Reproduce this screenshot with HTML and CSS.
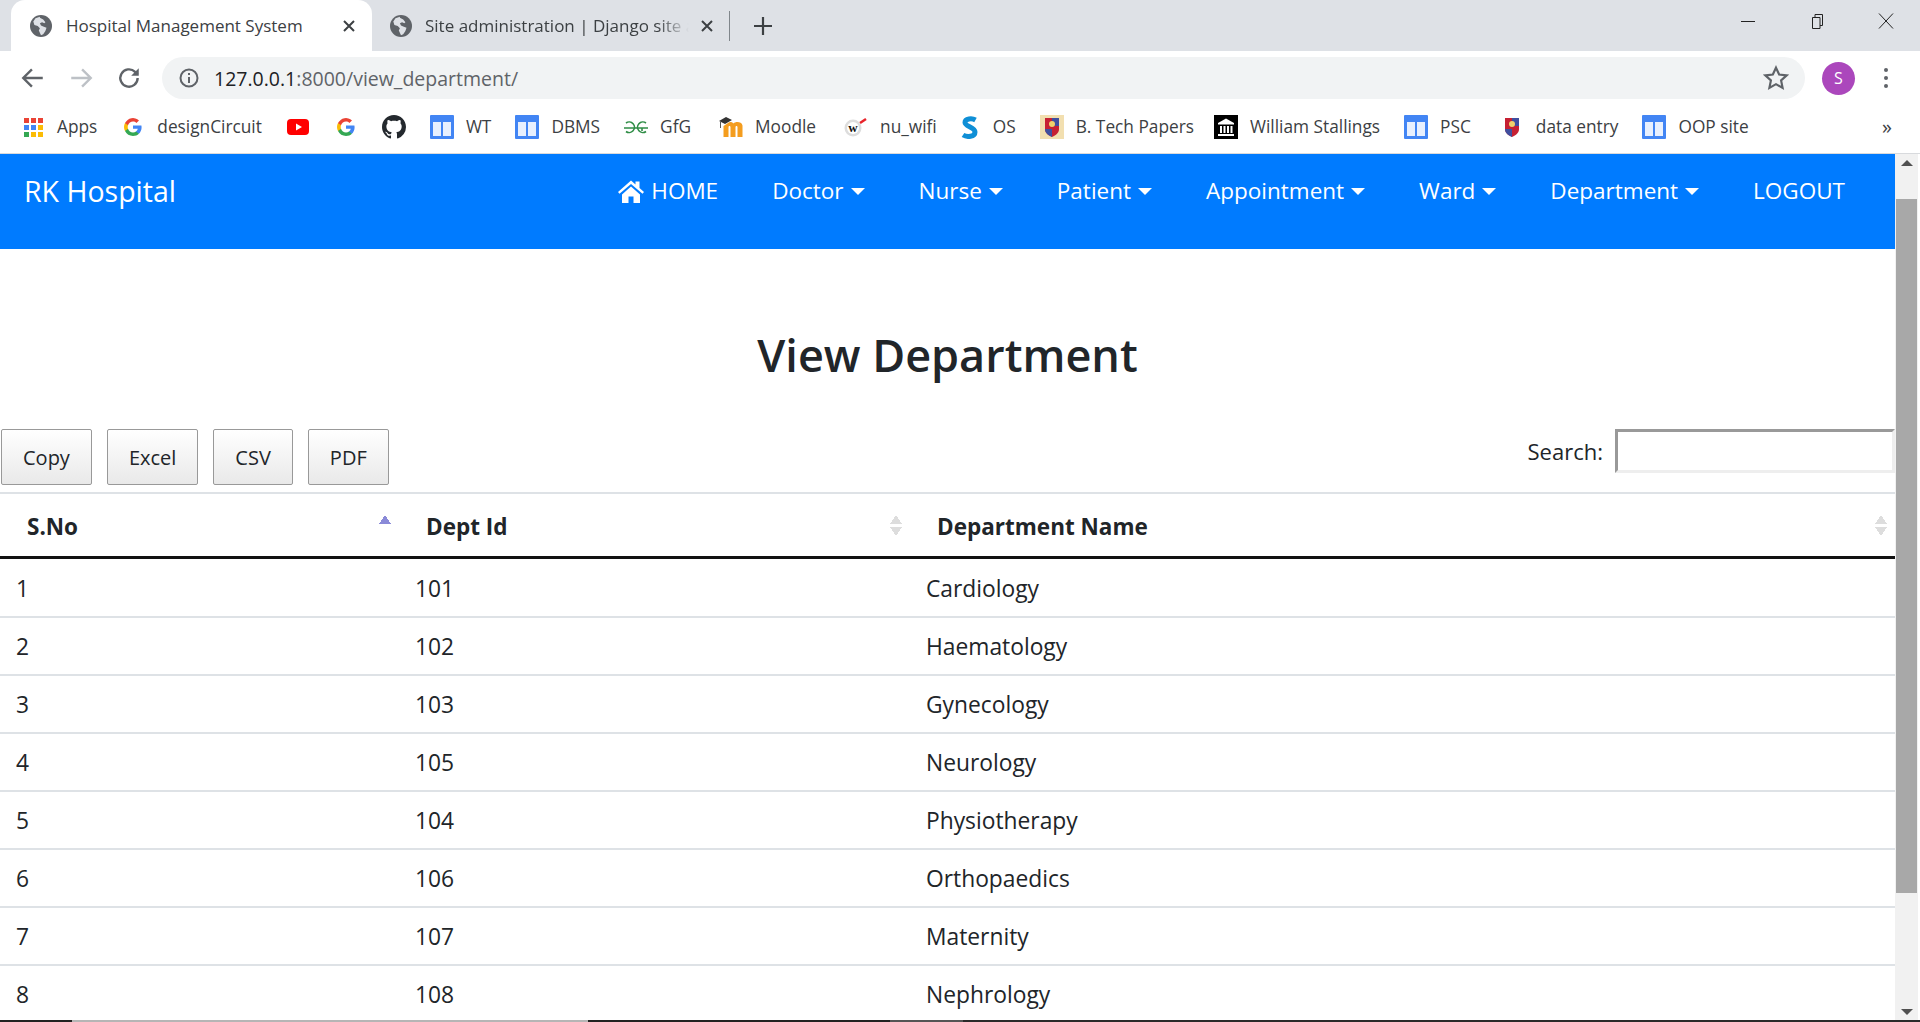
FILE: index.html
```html
<!DOCTYPE html>
<html>
<head>
    <title>Hospital Management System</title>
    <link rel="stylesheet" href="styles.css">
</head>
<body>
    <svg class="defs" width="0" height="0">
        <symbol id="globe" viewBox="0 0 20 20">
            <circle cx="10" cy="10" r="10" fill="#5f6368"/>
            <path d="M9 1.500 5 3 3 6l1 3 3 1 2 2-1 2 2 4.500 2-1 2-3 1-3-3-1-2-1-1-2 2-1 2 1 1-1-2-2.500-3-1.500z" fill="#dee1e6"/>
        </symbol>
        <symbol id="page" viewBox="0 0 24 24">
            <rect width="24" height="24" rx="1" fill="#4285f4"/>
            <path d="M3 7h18v14H3z" fill="#e8f0fe"/>
            <path d="M11 7h2v14h-2z" fill="#4285f4"/>
        </symbol>
        <symbol id="glogo" viewBox="0 0 18 18">
            <path d="M17.600 9.200c0-.6-.1-1.200-.2-1.800H9v3.400h4.800a4.100 4.100 0 0 1-1.800 2.700v2.200h2.900c1.700-1.600 2.700-3.900 2.700-6.500z" fill="#4285f4"/>
            <path d="M9 18c2.400 0 4.500-.8 5.900-2.200L12 13.600c-.8.500-1.800.9-3 .9-2.300 0-4.300-1.600-5-3.700H1v2.300A9 9 0 0 0 9 18z" fill="#34a853"/>
            <path d="M4 10.700a5.400 5.400 0 0 1 0-3.400V5H1a9 9 0 0 0 0 8l3-2.300z" fill="#fbbc05"/>
            <path d="M9 3.600c1.300 0 2.500.5 3.400 1.300L15 2.400A9 9 0 0 0 1 5l3 2.300c.7-2.100 2.700-3.700 5-3.700z" fill="#ea4335"/>
        </symbol>
        <symbol id="crest" viewBox="0 0 24 24">
            <path d="M5 3h14v11c0 4-3 6-7 8-4-2-7-4-7-8z" fill="#c62033"/>
            <path d="M12 3h7v8h-7z" fill="#3f4f9f"/>
            <path d="M5 14h7v8c-4-2-7-4-7-8z" fill="#3f4f9f"/>
            <circle cx="12" cy="9" r="3" fill="#f1d16b"/>
        </symbol>
    </svg>

    <div class="tabstrip">
        <div class="tab tab-active">
            <svg class="tab-icon"><use href="#globe"/></svg>
            <span class="tab-title">Hospital Management System</span>
            <svg class="tab-close" viewBox="0 0 12 12"><path d="M1 1l10 10M11 1 1 11"/></svg>
        </div>
        <div class="tab">
            <svg class="tab-icon"><use href="#globe"/></svg>
            <span class="tab-title tab-fade">Site administration | Django site admin</span>
            <svg class="tab-close" viewBox="0 0 12 12"><path d="M1 1l10 10M11 1 1 11"/></svg>
        </div>
        <div class="tab-sep"></div>
        <svg class="tab-new" viewBox="0 0 18 18"><path d="M9 0v18M0 9h18"/></svg>
        <div class="win-controls">
            <svg class="win-btn" viewBox="0 0 16 16"><path d="M1 8.500h14"/></svg>
            <svg class="win-btn" viewBox="0 0 16 16"><path d="M3.500 4.500h7.500v11H3.500zM6 4.500V1.500h7.500v11H11"/></svg>
            <svg class="win-btn" viewBox="0 0 16 16"><path d="M1 .5 15 15.500M15 .5 1 15.500"/></svg>
        </div>
    </div>

    <div class="toolbar">
        <svg class="tool-icon" viewBox="0 0 24 24"><path d="M21 12H4M11 4l-8 8 8 8"/></svg>
        <svg class="tool-icon tool-off" viewBox="0 0 24 24"><path d="M3 12h17M13 4l8 8-8 8"/></svg>
        <svg class="tool-icon" viewBox="0 0 24 24"><path d="M20 12a8 8 0 1 1-2.400-5.700L20 8.500"/><path class="solid" d="M21 3v7h-7z"/></svg>
        <div class="omnibox">
            <svg class="omni-info" viewBox="0 0 20 20"><circle cx="10" cy="10" r="8.500"/><path d="M10 9v6M10 5v2"/></svg>
            <span class="url"><span class="url-host">127.0.0.1</span>:8000/view_department/</span>
            <svg class="omni-star" viewBox="0 0 24 24"><path d="M12 2.500l2.900 6.300 6.900.8-5.100 4.700 1.400 6.800-6.100-3.400-6.100 3.400 1.400-6.800-5.100-4.700 6.900-.8z"/></svg>
        </div>
        <div class="avatar">S</div>
        <div class="kebab"><i></i><i></i><i></i></div>
    </div>

    <div class="bookmarks">
        <div class="bm">
            <svg class="bm-icon" viewBox="0 0 24 24">
                <path d="M3 3h5v5H3z" fill="#ea4335"/><path d="M10 3h5v5h-5z" fill="#ea4335"/><path d="M17 3h5v5h-5z" fill="#ea4335"/>
                <path d="M3 10h5v5H3z" fill="#4285f4"/><path d="M10 10h5v5h-5z" fill="#4285f4"/><path d="M17 10h5v5h-5z" fill="#fbbc05"/>
                <path d="M3 17h5v5H3z" fill="#34a853"/><path d="M10 17h5v5h-5z" fill="#fbbc05"/><path d="M17 17h5v5h-5z" fill="#fbbc05"/>
            </svg>
            <span>Apps</span>
        </div>
        <div class="bm">
            <svg class="bm-icon"><use href="#glogo" x="3" y="3" width="18" height="18"/></svg>
            <span>designCircuit</span>
        </div>
        <div class="bm">
            <svg class="bm-icon" viewBox="0 0 24 24"><rect x="1" y="4" width="22" height="16" rx="4" fill="#f00"/><path d="M10 8.500v7l6-3.500z" fill="#fff"/></svg>
        </div>
        <div class="bm">
            <svg class="bm-icon"><use href="#glogo" x="3" y="3" width="18" height="18"/></svg>
        </div>
        <div class="bm">
            <svg class="bm-icon" viewBox="0 0 16 16"><path fill="#24292e" d="M8 0C3.580 0 0 3.580 0 8c0 3.540 2.290 6.530 5.470 7.590.4.070.55-.17.55-.38 0-.19-.01-.82-.01-1.490-2.010.37-2.530-.49-2.690-.94-.09-.23-.48-.94-.82-1.130-.28-.15-.68-.52-.01-.53.63-.01 1.080.58 1.230.82.720 1.210 1.870.87 2.330.66.070-.52.280-.87.510-1.070-1.780-.2-3.640-.89-3.640-3.950 0-.87.310-1.590.820-2.150-.08-.2-.36-1.020.08-2.120 0 0 .67-.21 2.200.82.640-.18 1.320-.27 2-.27s1.360.09 2 .27c1.530-1.040 2.200-.82 2.200-.82.440 1.100.160 1.920.080 2.120.510.560.820 1.270.820 2.150 0 3.070-1.870 3.750-3.650 3.950.290.250.540.730.540 1.480 0 1.070-.01 1.930-.01 2.200 0 .210.150.460.550.380A8.010 8.010 0 0 0 16 8c0-4.420-3.580-8-8-8z"/></svg>
        </div>
        <div class="bm">
            <svg class="bm-icon"><use href="#page"/></svg>
            <span>WT</span>
        </div>
        <div class="bm">
            <svg class="bm-icon"><use href="#page"/></svg>
            <span>DBMS</span>
        </div>
        <div class="bm">
            <svg class="bm-icon" viewBox="0 0 24 24"><g fill="none" stroke="#2f8d46" stroke-width="1.600"><path d="M2 8a5.300 5.300 0 1 1 0 8.500M22 8a5.300 5.300 0 1 0 0 8.500M0 13h24M18 13v3"/></g></svg>
            <span>GfG</span>
        </div>
        <div class="bm bm-moodle">
            <svg class="bm-icon" viewBox="0 0 24 24">
                <path d="M9 8c1.500-1.500 4-1.500 5.500.5 1.500-2 8-2.500 9 2V22h-5v-10c0-1.500-2-1.500-2 0v10h-5v-10c0-1.500-2-1.500-2 0v10h-5V11z" fill="#f49d1f"/>
                <path d="M0 6l7-4 6 3-7 4z" fill="#333"/><path d="M1.500 7v6" stroke="#555" fill="none"/>
            </svg>
            <span>Moodle</span>
        </div>
        <div class="bm bm-wifi">
            <svg class="bm-icon" viewBox="0 0 24 24">
                <circle cx="9" cy="13" r="8.500" fill="#ddd"/><circle cx="9" cy="13" r="6" fill="#fff"/>
                <text x="9" y="17" text-anchor="middle" class="wiki-w">w</text>
                <path d="M16 8l6-4" stroke="#e8232a" stroke-width="2.500"/>
            </svg>
            <span>nu_wifi</span>
        </div>
        <div class="bm bm-os">
            <svg class="bm-icon" viewBox="0 0 24 24"><path d="M18.500 5C15 3 8 3.500 8 7.500s10 4.500 10 9.500-8 5.500-12 3" fill="none" stroke="#0f8fd6" stroke-width="5"/></svg>
            <span>OS</span>
        </div>
        <div class="bm">
            <svg class="bm-icon" viewBox="0 0 24 24"><rect width="24" height="24" fill="#f2dfb0"/><use href="#crest" width="24" height="24"/></svg>
            <span>B. Tech Papers</span>
        </div>
        <div class="bm bm-stallings">
            <svg class="bm-icon" viewBox="0 0 24 24"><rect width="24" height="24" fill="#000"/><path d="M12 3.500 20 8v1.500H4V8zM4 19h16v2H4zM6 11h2v7H6zM9.500 11h2v7h-2zM13 11h2v7h-2zM16.500 11h2v7h-2z" fill="#fff"/></svg>
            <span>William Stallings</span>
        </div>
        <div class="bm">
            <svg class="bm-icon"><use href="#page"/></svg>
            <span>PSC</span>
        </div>
        <div class="bm bm-entry">
            <svg class="bm-icon"><use href="#crest"/></svg>
            <span>data entry</span>
        </div>
        <div class="bm">
            <svg class="bm-icon"><use href="#page"/></svg>
            <span>OOP site</span>
        </div>
        <div class="bm-more">»</div>
    </div>

    <div class="viewport">
        <div class="page">
            <nav class="navbar">
                <a class="brand">RK Hospital</a>
                <ul class="nav">
                    <li class="nav-home">
                        <svg class="home-icon" viewBox="0 0 28 24"><path d="M14 1.500 1 13l1.500 1.800L14 5l11.500 9.800L27 13l-4.500-4V2.500h-4V5.500zM5 15.500V24h6.500v-6.500h5V24H23v-8.500L14 7.500z"/></svg>
                        HOME
                    </li>
                    <li class="drop">Doctor</li>
                    <li class="drop">Nurse</li>
                    <li class="drop">Patient</li>
                    <li class="drop">Appointment</li>
                    <li class="drop">Ward</li>
                    <li class="drop">Department</li>
                    <li>LOGOUT</li>
                </ul>
            </nav>

            <h1 class="title">View Department</h1>

            <div class="dt-top">
                <div class="dt-buttons">
                    <button class="dt-btn">Copy</button>
                    <button class="dt-btn">Excel</button>
                    <button class="dt-btn">CSV</button>
                    <button class="dt-btn">PDF</button>
                </div>
                <label class="dt-search">Search: <input type="search"></label>
            </div>

            <table class="dt">
                <colgroup>
                    <col class="col-sno">
                    <col class="col-id">
                    <col>
                </colgroup>
                <thead>
                    <tr>
                        <th><div class="th-in">S.No<span class="sort sort-asc"></span></div></th>
                        <th><div class="th-in">Dept Id<span class="sort"></span></div></th>
                        <th><div class="th-in">Department Name<span class="sort"></span></div></th>
                    </tr>
                </thead>
                <tbody>
                    <tr><td>1</td><td>101</td><td>Cardiology</td></tr>
                    <tr><td>2</td><td>102</td><td>Haematology</td></tr>
                    <tr><td>3</td><td>103</td><td>Gynecology</td></tr>
                    <tr><td>4</td><td>105</td><td>Neurology</td></tr>
                    <tr><td>5</td><td>104</td><td>Physiotherapy</td></tr>
                    <tr><td>6</td><td>106</td><td>Orthopaedics</td></tr>
                    <tr><td>7</td><td>107</td><td>Maternity</td></tr>
                    <tr><td>8</td><td>108</td><td>Nephrology</td></tr>
                </tbody>
            </table>
        </div>
        <div class="scrollbar">
            <span class="arrow-up"></span>
            <div class="thumb"></div>
            <span class="arrow-down"></span>
        </div>
    </div>

    <div class="taskbar">
        <i class="tb-a"></i><i class="tb-b"></i><i class="tb-a2"></i><i class="tb-c"></i><i class="tb-d"></i>
    </div>
</body>
</html>
```

FILE: styles.css
```css
* { box-sizing: border-box; }
html, body { margin: 0; height: 100%; }
body { display: flex; flex-direction: column; height: 1022px; overflow: hidden; background: #fff; font-family: "Open Sans", "Noto Sans", sans-serif; color: #212529; }
.defs { position: absolute; }

/* browser chrome */
.tabstrip { display: flex; align-items: center; height: 51px; flex: none; padding-left: 11px; background: #dee1e6; }
.tab { display: flex; align-items: center; width: 361px; height: 51px; padding-left: 19px; flex: none; color: #3c4043; }
.tab + .tab { width: 347px; padding-left: 18px; }
.tab-active { background: #fff; border-radius: 14px 14px 0 0; }
.tab-icon { width: 22px; height: 22px; flex: none; }
.tab-title { width: 265px; margin-left: 14px; font-size: 17px; white-space: nowrap; overflow: hidden; flex: none; }
.tab-fade { width: 264px; margin-left: 13px; -webkit-mask-image: linear-gradient(to right, #000 88%, transparent 100%); mask-image: linear-gradient(to right, #000 88%, transparent 100%); }
.tab-close { width: 12px; height: 12px; margin-left: 12px; flex: none; fill: none; stroke: #3c4043; stroke-width: 2; }
.tab-sep { width: 1px; height: 30px; margin-left: 10px; background: #80868b; flex: none; }
.tab-new { width: 18px; height: 18px; margin-left: 24px; fill: none; stroke: #3c4043; stroke-width: 2.200; flex: none; }
.win-controls { display: flex; margin-left: auto; gap: 53px; padding-right: 26px; margin-top: -10px; }
.win-btn { width: 16px; height: 16px; fill: none; stroke: #222; stroke-width: 1; }

.toolbar { display: flex; align-items: center; height: 54px; flex: none; padding: 0 0 0 20px; }
.tool-icon { width: 26px; height: 26px; margin-right: 22px; flex: none; fill: none; stroke: #5f6368; stroke-width: 2.200; }
.tool-icon .solid { fill: #5f6368; stroke: none; }
.tool-off { stroke: #bdc1c6; }
.omnibox { display: flex; align-items: center; width: 1643px; height: 42px; margin-left: -2px; padding: 0 16px 0 17px; flex: none; background: #f1f3f4; border-radius: 21px; }
.omni-info { width: 20px; height: 20px; flex: none; fill: none; stroke: #5f6368; stroke-width: 2; }
.url { margin-left: 15px; font-size: 19.500px; color: #5f6368; }
.url-host { color: #202124; }
.omni-star { width: 26px; height: 26px; margin-left: auto; fill: none; stroke: #5f6368; stroke-width: 2; }
.avatar { display: flex; align-items: center; justify-content: center; width: 33px; height: 33px; margin-left: 17px; flex: none; border-radius: 50%; background: #ab47bc; color: #fff; font-size: 16px; }
.kebab { display: flex; flex-direction: column; gap: 4px; margin-left: 29px; }
.kebab i { display: block; width: 4px; height: 4px; border-radius: 50%; background: #5f6368; }

.bookmarks { display: flex; align-items: center; height: 49px; flex: none; padding: 0 0 5px 21px; gap: 24px; font-size: 17.300px; color: #3c4043; border-bottom: 1px solid #d8dadd; }
.bm { display: flex; align-items: center; gap: 12px; flex: none; white-space: nowrap; }
.bm-icon { width: 24px; height: 24px; flex: none; }
.bm-moodle { margin-left: 4px; }
.bm-wifi { margin-left: 4px; }
.bm-os { margin-left: -4px; }
.bm-stallings { margin-left: -4px; }
.bm-entry { margin-left: 5px; }
.wiki-w { font-family: "Liberation Serif", serif; font-size: 13px; font-weight: 700; fill: #111; }
.bm-more { margin-left: auto; padding-right: 28px; font-size: 20px; }

/* page */
.viewport { display: flex; flex: 1; min-height: 0; overflow: hidden; }
.page { width: 1895px; flex: none; overflow: hidden; }
.navbar { display: flex; justify-content: space-between; align-items: flex-start; height: 95px; padding: 13px 0 0 24px; background: #007bff; color: #fff; }
.brand { font-size: 28.500px; line-height: 48px; }
.nav { display: flex; margin: 0; padding: 0 50px 0 0; list-style: none; font-size: 22.500px; line-height: 48px; }
.nav li { margin-left: 54px; white-space: nowrap; }
.nav-home { display: flex; align-items: center; }
.home-icon { width: 28px; height: 24px; margin-right: 6px; fill: #fff; }
.drop::after { content: ""; display: inline-block; margin-left: 7px; vertical-align: 4px; border-top: 7px solid #fff; border-left: 7px solid transparent; border-right: 7px solid transparent; }

.title { margin: 76px 0 44px; font-size: 45px; line-height: 60px; font-weight: 600; text-align: center; }

.dt-top { display: flex; justify-content: space-between; align-items: flex-start; height: 63px; padding-left: 1px; }
.dt-buttons { display: flex; gap: 15px; }
.dt-btn { height: 56px; padding: 0 21px; border: 1px solid #999; border-radius: 2px; background: linear-gradient(to bottom, #fff, #e9e9e9); font: 20px "Open Sans", sans-serif; color: #212529; }
.dt-search { display: flex; align-items: center; gap: 12px; font-size: 22px; }
.dt-search input { width: 280px; height: 44px; padding: 0; border: 3px solid; border-color: #999 #eee #eee #999; background: #fff; }

.dt { width: 1895px; border-collapse: collapse; table-layout: fixed; font-size: 22.800px; }
.col-sno { width: 399px; }
.col-id { width: 511px; }
.dt th { height: 64px; padding: 4px 8px 0 27px; border-top: 2px solid #dee2e6; border-bottom: 3px solid #111; text-align: left; font-weight: 700; font-size: 22.500px; }
.th-in { display: flex; justify-content: space-between; align-items: center; }
.dt td { height: 58px; padding: 1px 0 0 16px; border-bottom: 2px solid #dee2e6; }
.dt tbody tr:first-child td { height: 60px; padding-top: 3px; }
.sort { display: block; width: 12px; height: 21px; margin-top: -2px; background:
    linear-gradient(to bottom right, transparent 50%, #ddd 50%) left 0 top 0 / 6px 9px no-repeat,
    linear-gradient(to bottom left, transparent 50%, #ddd 50%) right 0 top 0 / 6px 9px no-repeat,
    linear-gradient(to top right, transparent 50%, #ddd 50%) left 0 bottom 0 / 6px 9px no-repeat,
    linear-gradient(to top left, transparent 50%, #ddd 50%) right 0 bottom 0 / 6px 9px no-repeat; }
.sort-asc { background:
    linear-gradient(to bottom right, transparent 50%, #8a8ad8 50%) left 0 top 0 / 6px 9px no-repeat,
    linear-gradient(to bottom left, transparent 50%, #8a8ad8 50%) right 0 top 0 / 6px 9px no-repeat; }

/* page scrollbar */
.scrollbar { display: flex; flex-direction: column; align-items: center; width: 23px; padding-top: 6px; flex: none; background: #f1f1f1; }
.arrow-up { width: 0; height: 0; border-bottom: 6px solid #505050; border-left: 6px solid transparent; border-right: 6px solid transparent; }
.thumb { width: 21px; height: 694px; margin-top: 33px; background: #a8a8a8; }
.arrow-down { width: 0; height: 0; margin-top: 116px; border-top: 6px solid #505050; border-left: 6px solid transparent; border-right: 6px solid transparent; }

.taskbar { display: flex; height: 2px; flex: none; }
.taskbar i { display: block; }
.tb-a { width: 72px; background: #222; }
.tb-b { width: 516px; background: #b5b5b5; }
.tb-a2 { width: 302px; background: #222; }
.tb-c { width: 73px; background: #555; }
.tb-d { flex: 1; background: #2a2a2a; }
```
